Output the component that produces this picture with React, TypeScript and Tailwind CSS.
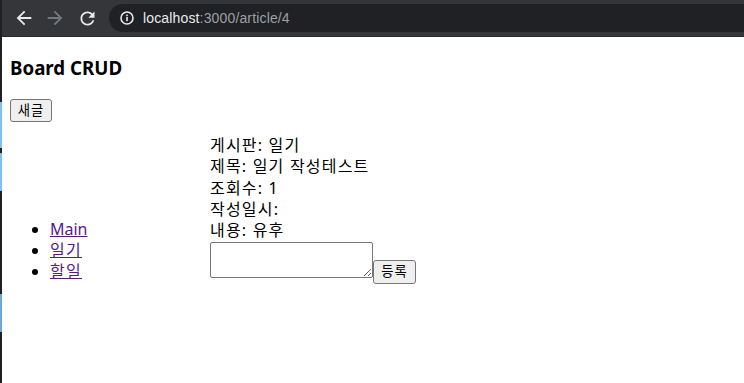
import React from "react";

const strip = [
  { h: 102, c: "bg-[#202124]" },
  { h: 46, c: "bg-[#7cc0f5]" },
  { h: 5, c: "bg-[#202124]" },
  { h: 38, c: "bg-[#7cc0f5]" },
  { h: 103, c: "bg-[#202124]" },
  { h: 38, c: "bg-[#6aa8dc]" },
];

function BackIcon({ color }: { color: string }) {
  return (
    <svg width="22" height="22" viewBox="0 0 24 24" fill={color}>
      <path d="M20 11H7.830l5.59-5.59L12 4l-8 8 8 8 1.41-1.410L7.83 13H20v-2z" />
    </svg>
  );
}

function ForwardIcon({ color }: { color: string }) {
  return (
    <svg width="22" height="22" viewBox="0 0 24 24" fill={color}>
      <path d="M4 11h12.17l-5.59-5.59L12 4l8 8-8 8-1.41-1.41L16.17 13H4v-2z" />
    </svg>
  );
}

function ReloadIcon() {
  return (
    <svg width="21" height="21" viewBox="0 0 24 24" fill="#e8eaed">
      <path d="M17.65 6.35C16.2 4.9 14.21 4 12 4c-4.42 0-7.99 3.58-7.99 8s3.57 8 7.99 8c3.73 0 6.84-2.55 7.73-6h-2.08c-.82 2.33-3.04 4-5.650 4-3.31 0-6-2.69-6-6s2.69-6 6-6c1.66 0 3.14.69 4.22 1.78L13 11h7V4l-2.35 2.35z" />
    </svg>
  );
}

function InfoIcon() {
  return (
    <svg width="14" height="14" viewBox="0 0 14 14" fill="none">
      <circle cx="7" cy="7" r="6" stroke="#e8eaed" strokeWidth="1.6" />
      <rect x="6.2" y="6" width="1.6" height="4.2" fill="#e8eaed" />
      <rect x="6.2" y="3.6" width="1.6" height="1.6" fill="#e8eaed" />
    </svg>
  );
}

const body = "font-['Noto_Sans','Noto_Sans_CJK_KR',sans-serif]";
const btn =
  "bg-[#efefef] border border-[#767676] rounded-[3px] text-[13.33px] leading-none text-black flex items-center justify-center";

export default function App() {
  return (
    <div className="w-[744px] h-[383px] overflow-hidden bg-white flex">
      <div className="w-[2px] h-full flex flex-col bg-[#202124] shrink-0">
        {strip.map((s, i) => (
          <div key={i} className={s.c} style={{ height: s.h }} />
        ))}
      </div>

      <div className="flex-1 flex flex-col">
        {/* browser toolbar */}
        <div className="h-[37px] bg-[#35363a] border-b border-[#2a2b2e] flex items-center shrink-0">
          <div className="ml-[11px]"><BackIcon color="#e8eaed" /></div>
          <div className="ml-[9px]"><ForwardIcon color="#75787c" /></div>
          <div className="ml-[11px]"><ReloadIcon /></div>
          <div className="ml-[11px] flex-1 h-[28px] rounded-l-full bg-[#202124] flex items-center pl-[11px]">
            <InfoIcon />
            <span className="ml-[9px] font-['Liberation_Sans',Arial,sans-serif] text-[14px] tracking-[0.15px]">
              <span className="text-[#e8eaed]">localhost</span>
              <span className="text-[#9aa0a6]">:3000/article/4</span>
            </span>
          </div>
        </div>

        {/* page */}
        <div className={`${body} pl-[8px] text-black`}>
          <h3 className="mt-[18px] text-[18.72px] leading-[25px] font-bold">Board CRUD</h3>
          <button className={`${btn} mt-[19px] w-[42px] h-[23px] tracking-[1px]`}>새글</button>

          <div className="mt-[13px] flex items-end">
            <ul className="w-[200px] pl-[40px] list-disc mb-[1px] text-[16px] leading-[21.33px]">
              <li><a href="#" className="text-[#551a8b] underline">Main</a></li>
              <li><a href="#" className="text-[#551a8b] underline tracking-[1.3px]">일기</a></li>
              <li><a href="#" className="text-[#551a8b] underline tracking-[1.3px]">할일</a></li>
            </ul>
            <div className="text-[16px] leading-[21.33px] tracking-[1.2px]">
              <div>게시판: 일기</div>
              <div>제목: 일기 작성테스트</div>
              <div>조회수: 1</div>
              <div>작성일시: </div>
              <div>내용: 유후</div>
              <div className="flex items-start">
                <textarea className="w-[163px] h-[36px] border border-[#767676] rounded-[2px] resize" />
                <button className={`${btn} mt-[18px] w-[43px] h-[24px] tracking-[1px]`}>등록</button>
              </div>
            </div>
          </div>
        </div>
      </div>
    </div>
  );
}
